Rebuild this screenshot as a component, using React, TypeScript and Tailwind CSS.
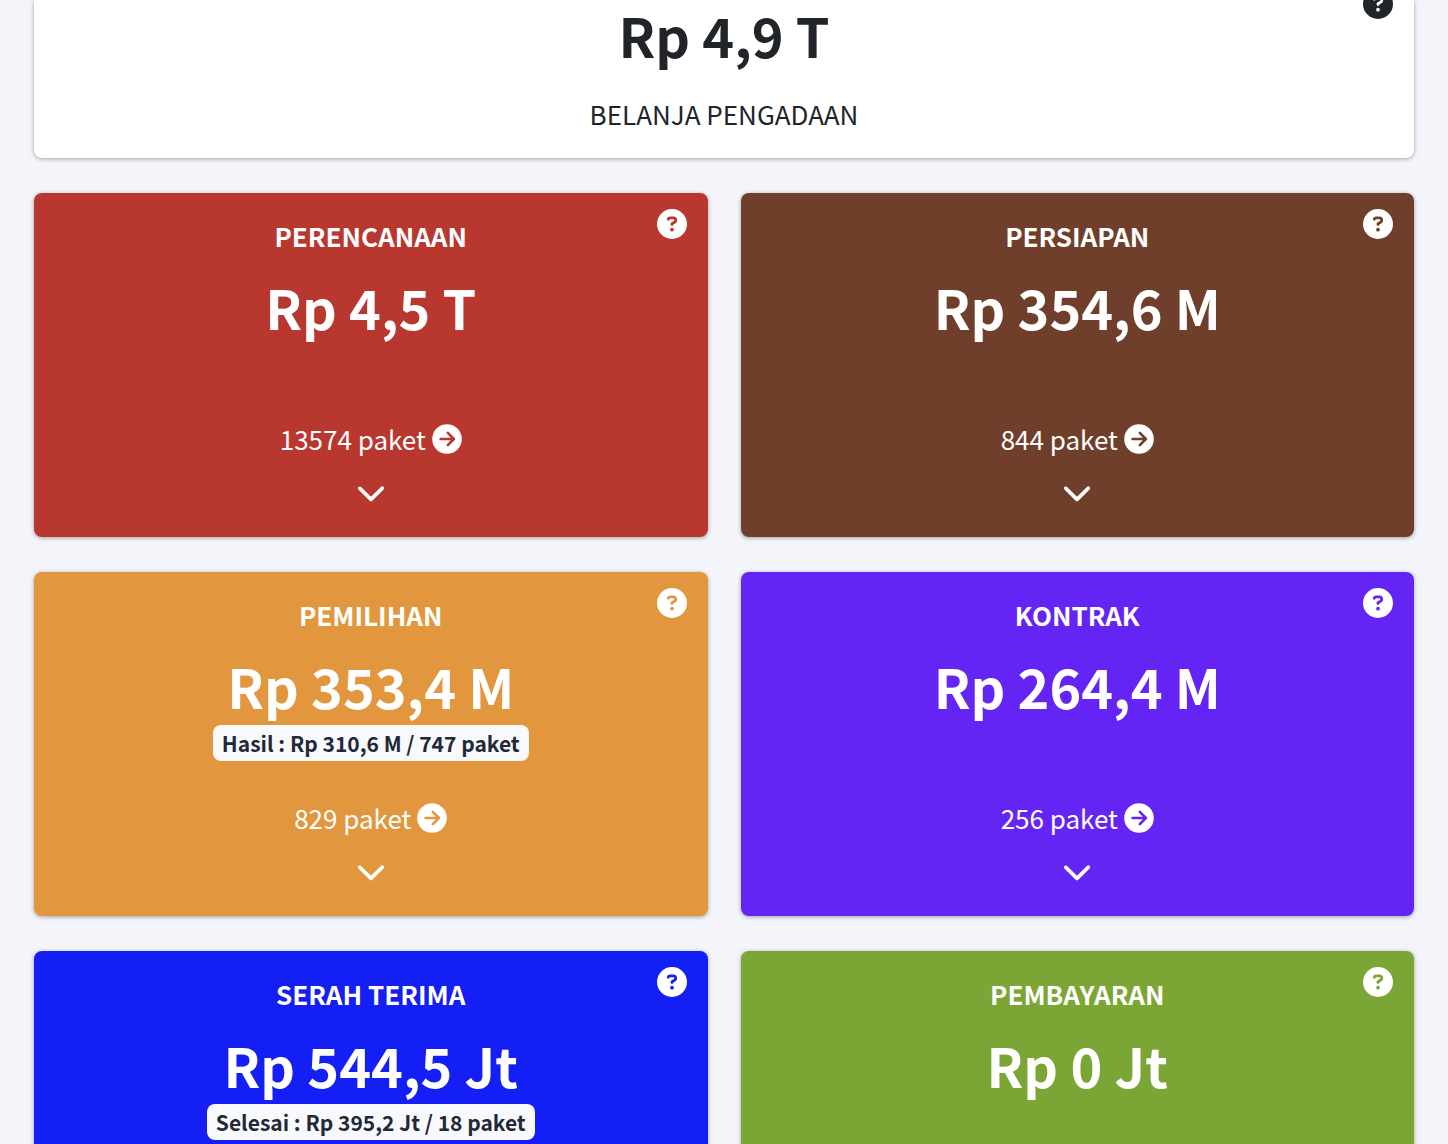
import { FaChevronDown, FaCircleQuestion } from 'react-icons/fa6';
import clsx from 'clsx';

interface Stage {
  title: string;
  amount: string;
  color: string;
  arrowColor?: string;
  packages?: string;
  result?: string;
}

const stages: Stage[] = [
  {
    title: 'PERENCANAAN',
    amount: 'Rp 4,5 T',
    color: 'bg-[#b8382f]',
    arrowColor: 'stroke-[#b8382f]',
    packages: '13574 paket',
  },
  {
    title: 'PERSIAPAN',
    amount: 'Rp 354,6 M',
    color: 'bg-[#6f3f2c]',
    arrowColor: 'stroke-[#6f3f2c]',
    packages: '844 paket',
  },
  {
    title: 'PEMILIHAN',
    amount: 'Rp 353,4 M',
    color: 'bg-[#e2973e]',
    arrowColor: 'stroke-[#e2973e]',
    packages: '829 paket',
    result: 'Hasil : Rp 310,6 M / 747 paket',
  },
  {
    title: 'KONTRAK',
    amount: 'Rp 264,4 M',
    color: 'bg-[#6425f4]',
    arrowColor: 'stroke-[#6425f4]',
    packages: '256 paket',
  },
  {
    title: 'SERAH TERIMA',
    amount: 'Rp 544,5 Jt',
    color: 'bg-[#141ff5]',
    result: 'Selesai : Rp 395,2 Jt / 18 paket',
  },
  { title: 'PEMBAYARAN', amount: 'Rp 0 Jt', color: 'bg-[#7ba534]' },
];

function HelpButton({ label, className }: { label: string; className: string }) {
  return (
    <button type="button" aria-label={`Info ${label}`} className={clsx('absolute right-[21px]', className)}>
      <FaCircleQuestion className="size-[30px]" />
    </button>
  );
}

function ArrowCircle({ className }: { className?: string }) {
  return (
    <svg viewBox="0 0 30 30" className="size-[30px]" aria-hidden="true">
      <circle cx="15" cy="15" r="14.8" fill="currentColor" />
      <path
        d="M8.6 15H21.6M15.8 8.9L21.9 15L15.8 21.1"
        fill="none"
        strokeWidth="2.6"
        strokeLinecap="round"
        strokeLinejoin="round"
        className={className}
      />
    </svg>
  );
}

function StageCard({ stage }: { stage: Stage }) {
  return (
    <section
      className={clsx(
        'relative flex min-h-[344px] flex-col items-center rounded-lg pt-[23px] text-white shadow-[0_1px_4px_rgba(0,0,0,0.35)]',
        stage.color
      )}
    >
      <HelpButton label={stage.title} className="top-4" />
      <h2 className="text-[26px] leading-10 font-bold">{stage.title}</h2>
      <p className="mt-4 text-[54px] leading-[70px] font-bold">{stage.amount}</p>
      <div className="mt-1 h-[73px]">
        {stage.result && (
          <span className="block rounded-lg bg-[#f8f9fc] px-[9px] text-[21px] leading-9 font-bold text-[#1f2937]">
            {stage.result}
          </span>
        )}
      </div>
      {stage.packages && (
        <>
          <a href="#paket" className="flex items-center gap-[6px] text-[26px] leading-10">
            {stage.packages}
            <ArrowCircle className={stage.arrowColor} />
          </a>
          <button type="button" aria-label={`Detail ${stage.title}`} className="mt-[18px]">
            <FaChevronDown className="size-[30px]" />
          </button>
        </>
      )}
    </section>
  );
}

export default function App() {
  return (
    <main className="h-screen overflow-hidden bg-[#f4f5fa] px-[34px] font-['Noto_Sans_CJK_JP','Noto_Sans_CJK_SC',sans-serif]">
      <section className="relative flex flex-col items-center rounded-b-lg bg-white pb-6 text-[#212529] shadow-[0_1px_4px_rgba(0,0,0,0.35)]">
        <HelpButton label="BELANJA PENGADAAN" className="-top-[11px]" />
        <p className="text-[54px] leading-[70px] font-bold">Rp 4,9 T</p>
        <h1 className="mt-6 text-[26px] leading-10">BELANJA PENGADAAN</h1>
      </section>
      <div className="mt-[35px] grid grid-cols-2 gap-x-[33px] gap-y-[35px]">
        {stages.map((stage) => (
          <StageCard key={stage.title} stage={stage} />
        ))}
      </div>
    </main>
  );
}
